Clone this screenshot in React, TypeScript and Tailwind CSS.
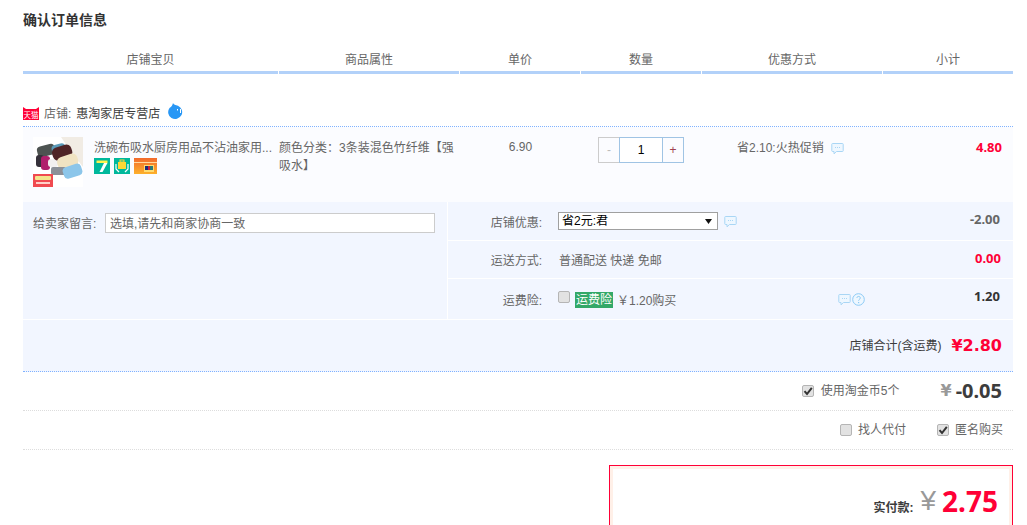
const CJK = "font-['Liberation_Sans','Noto_Sans_CJK_SC',sans-serif]";

function Bubble({ className = "" }: { className?: string }) {
  return (
    <svg width="13" height="13" viewBox="0 0 13 13" className={className}>
      <path d="M1.5 1.500h10a.7.7 0 0 1 .7.7v6.600a.7.7 0 0 1-.7.7H5.500L3 11.800V9.500H1.500a.7.7 0 0 1-.7-.7V2.200a.7.7 0 0 1 .7-.7z" fill="#eef7ff" stroke="#a9d6f5" strokeWidth="1" />
      <path d="M4 5.500h1M6 5.500h1M8 5.500h1" stroke="#a9d6f5" strokeWidth="1" />
    </svg>
  );
}

function Check({ on }: { on?: boolean }) {
  return (
    <span className="flex h-[12px] w-[12px] items-center justify-center rounded-[2px] border border-[#b5b5b5] bg-[#e2e2e2]">
      {on && (
        <svg width="10" height="10" viewBox="0 0 10 10">
          <path d="M1.500 5.200 4 8l4.800-6.200" fill="none" stroke="#333" strokeWidth="2" />
        </svg>
      )}
    </span>
  );
}

function Product() {
  return (
    <svg width="50" height="50" viewBox="0 0 50 50" className="shrink-0 bg-white">
      <path d="M28 0h22v30L36 12z" fill="#f1ece4" />
      <rect x="4" y="8" width="18" height="11" rx="4" fill="#4d5351" transform="rotate(-15 13 13)" />
      <rect x="19" y="7" width="14" height="13" rx="4" fill="#5a9ab8" transform="rotate(-15 26 13)" />
      <rect x="3" y="18" width="8" height="12" rx="3" fill="#34303a" />
      <rect x="8" y="19" width="9" height="14" rx="3" fill="#b01f6c" />
      <rect x="15" y="22" width="10" height="8" rx="3" fill="#f2f0f0" />
      <rect x="19" y="9" width="20" height="13" rx="5" fill="#4f2426" transform="rotate(-18 29 15)" />
      <rect x="24" y="18" width="21" height="13" rx="5" fill="#f0e3c2" transform="rotate(-18 35 24)" />
      <rect x="18" y="30" width="15" height="8" rx="2" fill="#8c9098" />
      <rect x="30" y="28" width="19" height="12" rx="4" fill="#8cc6ea" transform="rotate(-18 40 34)" />
      <rect x="0" y="37" width="20" height="13" fill="#f04a50" />
      <rect x="2" y="39" width="16" height="4" rx="1" fill="#f3e58c" />
      <rect x="3" y="45" width="14" height="2" fill="#ffd0c8" />
    </svg>
  );
}

function TmallBadge() {
  return (
    <svg width="16" height="15" viewBox="0 0 16 15" className="shrink-0">
      <path d="M0 1l3 2h10l3-2v13H0z" fill="#ff0036" />
      <text x="8" y="11.500" textAnchor="middle" fontSize="7.500" fill="#fff" fontFamily="Noto Sans CJK SC, sans-serif">天猫</text>
    </svg>
  );
}

export default function App() {
  return (
    <div className={`${CJK} h-[525px] w-[1027px] overflow-hidden bg-white text-[12px] text-[#666]`}>
      <div className="ml-[23px] w-[990px]">
        <h2 className="h-[41px] pt-[10px] text-[14px] leading-[20px] font-bold text-[#333]">确认订单信息</h2>

        <div className="flex h-[33px] gap-[1px] text-center leading-[38px]">
          <div className="w-[255px] border-b-[3px] border-[#b2d1f9]">店铺宝贝</div>
          <div className="w-[180px] border-b-[3px] border-[#b2d1f9]">商品属性</div>
          <div className="w-[120px] border-b-[3px] border-[#b2d1f9]">单价</div>
          <div className="w-[120px] border-b-[3px] border-[#b2d1f9]">数量</div>
          <div className="w-[180px] border-b-[3px] border-[#b2d1f9]">优惠方式</div>
          <div className="w-[130px] border-b-[3px] border-[#b2d1f9]">小计</div>
        </div>

        <div className="mt-[28px] flex h-[25px] items-center border-b border-dotted border-[#80b2ff] pb-[1px]">
          <TmallBadge />
          <span className="ml-[5px]">店铺:</span>
          <span className="ml-[5px] text-[#3c3c3c]">惠淘家居专营店</span>
          <svg width="17" height="17" viewBox="0 0 17 17" className="mt-[-5px] ml-[7px]">
            <path d="M6 0c.5 1.800 2.500 2.300 5 2.700A7 7 0 1 1 2.500 5C4.500 4 5.500 2 6 0z" fill="#2897f5" />
            <rect x="10" y="6" width="1" height="1.500" fill="#fff" />
            <rect x="13" y="6" width="1" height="4" fill="#fff" />
          </svg>
        </div>

        <div className="flex h-[75px] bg-[#fbfcff]">
          <div className="flex w-[256px] pt-[10px] pl-[10px]">
            <Product />
            <div className="ml-[11px] w-[178px]">
              <div className="pt-[1px] leading-[20px] whitespace-nowrap">洗碗布吸水厨房用品不沾油家用...</div>
              <div className="flex gap-[4px]">
                <svg width="16" height="16" viewBox="0 0 16 16">
                  <rect width="16" height="16" fill="#00b89c" />
                  <path d="M2.500 2.500h11v2.500h-11z" fill="#fff34d" />
                  <path d="M13.500 5 8.500 14h-3l4.500-9z" fill="#fff" />
                </svg>
                <svg width="16" height="16" viewBox="0 0 16 16">
                  <rect width="16" height="16" fill="#00b89c" />
                  <rect x="4" y="4" width="8" height="7" fill="#ffd836" />
                  <rect x="6" y="2" width="4" height="2" fill="none" stroke="#ffd836" />
                  <path d="M2 6v5l3 3M14 6v5l-3 3" fill="none" stroke="#fff" strokeWidth="1.200" />
                </svg>
                <svg width="23" height="16" viewBox="0 0 23 16">
                  <defs>
                    <linearGradient id="card" x1="0" y1="0" x2="0" y2="1">
                      <stop offset="0" stopColor="#f26a2c" />
                      <stop offset="1" stopColor="#fdb12c" />
                    </linearGradient>
                  </defs>
                  <rect width="23" height="16" fill="url(#card)" />
                  <rect y="4" width="23" height="1" fill="#ffd9a0" />
                  <rect x="10" y="7" width="10" height="7" fill="#ffdc70" />
                  <rect x="11" y="8" width="3" height="4" fill="#1a2a7a" />
                  <rect x="14" y="8" width="2" height="4" fill="#c8203a" />
                  <rect x="16" y="8" width="3" height="4" fill="#2a7a7a" />
                </svg>
              </div>
            </div>
          </div>
          <div className="w-[181px] pt-[12px] pr-[4px] leading-[18px] break-all">颜色分类：3条装混色竹纤维【强吸水】</div>
          <div className="w-[121px] pt-[11px] text-center leading-[18px]">6.90</div>
          <div className="w-[121px] pt-[10px] pl-[17px]">
            <div className="flex h-[26px] w-[86px] text-center leading-[24px]">
              <span className="w-[21px] border border-r-0 border-[#cccccc] text-[#bbb]">-</span>
              <span className="w-[44px] border border-[#a0c4e4] bg-white text-black">1</span>
              <span className="w-[21px] border border-l-0 border-[#a0c4e4] text-[#a04050]">+</span>
            </div>
          </div>
          <div className="flex w-[181px] items-start pt-[12px] pl-[35px]">
            <span className="leading-[18px]">省2.10:火热促销</span>
            <Bubble className="mt-[3px] ml-[7px]" />
          </div>
          <div className="w-[130px] pt-[11px] pr-[11px] text-right font-['Noto_Sans',sans-serif] text-[13px] leading-[18px] font-bold text-[#ff0036]">4.80</div>
        </div>

        <div className="flex h-[117px] gap-[1px]">
          <div className="flex w-[424px] items-start bg-[#f2f6ff] pt-[11px] pl-[10px]">
            <span className="w-[72px] pt-[1px] leading-[20px]">给卖家留言:</span>
            <div className="h-[20px] w-[330px] border border-[#ccc] bg-white pt-[1px] pl-[4px] leading-[19px]">选填,请先和商家协商一致</div>
          </div>
          <div className="flex-1">
            <div className="flex h-[38px] items-center bg-[#f2f6ff]">
              <span className="w-[95px] pt-[3px] pr-[1px] text-right">店铺优惠:</span>
              <div className="ml-[15px] flex h-[18px] w-[160px] items-center justify-between border border-[#a0a0a0] bg-white pr-[5px] pl-[3px] text-black">
                <span>省2元:君</span>
                <svg width="7" height="5" viewBox="0 0 7 5"><path d="M0 0h7L3.500 5z" fill="#111" /></svg>
              </div>
              <Bubble className="ml-[6px]" />
              <span className="mt-[-3px] mr-[13px] ml-auto font-['Noto_Sans',sans-serif] text-[13px] font-bold text-[#666]">-2.00</span>
            </div>
            <div className="mt-[1px] flex h-[37px] items-center bg-[#f2f6ff]">
              <span className="w-[95px] pt-[3px] pr-[1px] text-right">运送方式:</span>
              <span className="ml-[16px] pt-[3px]">普通配送 快递 免邮</span>
              <span className="mt-[-2px] mr-[12px] ml-auto font-['Noto_Sans',sans-serif] text-[13px] font-bold text-[#ff0036]">0.00</span>
            </div>
            <div className="mt-[1px] flex h-[40px] items-center bg-[#f2f6ff]">
              <span className="w-[95px] pt-[3px] pr-[1px] text-right">运费险:</span>
              <span className="mt-[-4px] ml-[15px]"><Check /></span>
              <span className="mt-[1px] ml-[5px] h-[16px] bg-[#33a868] px-[1px] leading-[16px] text-white">运费险</span>
              <span className="ml-[4px] pt-[3px]">￥1.20购买</span>
              <Bubble className="ml-[162px]" />
              <svg width="13" height="13" viewBox="0 0 13 13" className="ml-[1px]">
                <circle cx="6.500" cy="6.500" r="5.800" fill="#eef7ff" stroke="#8ccaf5" strokeWidth="1" />
                <path d="M4.800 5c.2-2.200 3.600-2 3.500 0 0 1.300-1.700 1.400-1.700 2.700" fill="none" stroke="#8ccaf5" strokeWidth="1" />
                <rect x="6" y="9" width="1.200" height="1.200" fill="#8ccaf5" />
              </svg>
              <span className="mt-[-4px] mr-[13px] ml-auto font-['Noto_Sans',sans-serif] text-[13px] font-bold text-[#333]">1.20</span>
            </div>
          </div>
        </div>

        <div className="mt-[1px] flex h-[52px] items-center justify-end border-b border-dotted border-[#80b2ff] bg-[#f2f6ff] pr-[11px] text-[#3c3c3c]">
          <span className="mt-[1px]">店铺合计(含运费)</span>
          <span className="ml-[10px] font-['DejaVu_Sans',sans-serif] text-[16px] font-bold text-[#ff0036]">¥2.80</span>
        </div>

        <div className="flex h-[39px] items-center justify-end border-b border-dotted border-[#ddd] pr-[11px]">
          <Check on />
          <span className="ml-[7px]">使用淘金币5个</span>
          <span className="ml-[41px] font-['DejaVu_Sans',sans-serif] text-[16px] font-bold text-[#999]">¥</span>
          <span className="ml-[4px] font-['Noto_Sans',sans-serif] text-[20px] leading-[22px] font-bold text-[#3c3c3c]">-0.05</span>
        </div>

        <div className="flex h-[39px] items-center justify-end border-b border-dotted border-[#ddd] pr-[10px]">
          <Check />
          <span className="ml-[6px]">找人代付</span>
          <span className="ml-[31px]"><Check on /></span>
          <span className="ml-[6px]">匿名购买</span>
        </div>

        <div className="mt-[15px] ml-[586px] h-[80px] border border-[#ff0036]">
          <div className="flex h-full items-start justify-end border-[3px] border-[#fff0e8] bg-white pt-[14px] pr-[11px]">
            <span className="mt-[16px] font-bold text-[#3c3c3c]">实付款:</span>
            <span className="ml-[7px] text-[28px] leading-[36px] text-[#999]">¥</span>
            <span className="ml-[6px] font-['Noto_Sans',sans-serif] text-[28px] leading-[36px] font-bold text-[#ff0036]">2.75</span>
          </div>
        </div>
      </div>
    </div>
  );
}
